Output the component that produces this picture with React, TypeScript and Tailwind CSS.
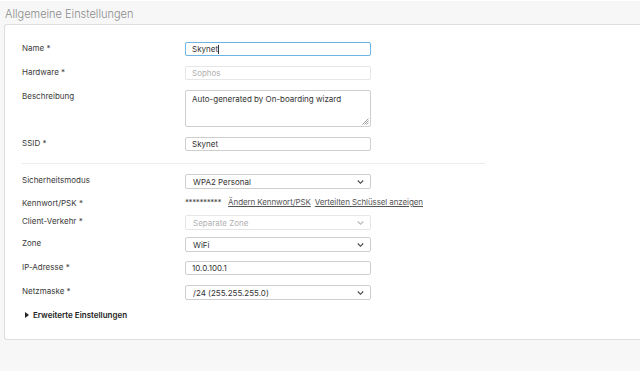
import React from "react";

const Chevron = ({ disabled = false }: { disabled?: boolean }) => (
  <svg width="7" height="5" viewBox="0 0 7 5" className="absolute right-[6px] top-1/2 -translate-y-1/2">
    <path d="M0.8 1 L3.5 3.8 L6.2 1" fill="none" stroke={disabled ? "#b5b5b5" : "#444"} strokeWidth="1.1" />
  </svg>
);

const Label = ({ children }: { children: React.ReactNode }) => (
  <div className="w-[163px] shrink-0 text-[8px] leading-[10px] text-[#3a3a3a] pt-[1px]">{children}</div>
);

const Input = ({ value, disabled = false, focused = false }: { value: string; disabled?: boolean; focused?: boolean }) => (
  <div
    className={
      "w-[186px] h-[14px] rounded-[2px] border px-[6px] text-[8px] leading-[12px] flex items-center " +
      (focused
        ? "border-[#6cb4e4] text-[#333]"
        : disabled
        ? "border-[#e6e6e6] text-[#b0b0b0]"
        : "border-[#cfcfcf] text-[#333]")
    }
  >
    {value}
    {focused && <span className="inline-block w-[1px] h-[9px] bg-[#333]" />}
  </div>
);

const Select = ({ value, disabled = false }: { value: string; disabled?: boolean }) => (
  <div
    className={
      "relative w-[186px] h-[15px] rounded-[2px] border px-[7px] text-[8px] leading-[12px] flex items-center " +
      (disabled ? "border-[#e6e6e6] text-[#b0b0b0]" : "border-[#cfcfcf] text-[#333]")
    }
  >
    {value}
    <Chevron disabled={disabled} />
  </div>
);

export default function App() {
  return (
    <div className="w-[640px] h-[371px] bg-[#f7f7f7] overflow-hidden" style={{ fontFamily: "Inter, 'Noto Sans', sans-serif" }}>
      <div className="h-[24px] border-t border-white pl-[5px] flex items-center">
        <span className="text-[11px] font-light text-[#8c8c8c] leading-[14px] pt-[2px]">Allgemeine Einstellungen</span>
      </div>
      <div className="ml-[4px] h-[316px] bg-white border border-r-0 border-[#dedede] rounded-l-[3px] pl-[17px] pt-[17px]">
        <div className="flex">
          <Label>Name *</Label>
          <Input value="Skynet" focused />
        </div>
        <div className="flex mt-[10px]">
          <Label>Hardware *</Label>
          <Input value="Sophos" disabled />
        </div>
        <div className="flex mt-[10px]">
          <Label>Beschreibung</Label>
          <div className="relative w-[186px] h-[37px] rounded-[2px] border border-[#cfcfcf] px-[6px] pt-[2px] text-[8px] leading-[12px] text-[#333]">
            Auto-generated by On-boarding wizard
            <svg width="7" height="7" viewBox="0 0 7 7" className="absolute right-[1px] bottom-[1px]">
              <path d="M6.5 0.5 L0.5 6.5 M6.5 2.5 L2.5 6.5 M6.5 4.5 L4.5 6.5" stroke="#8a8a8a" strokeWidth="0.8" />
            </svg>
          </div>
        </div>
        <div className="flex mt-[10px]">
          <Label>SSID *</Label>
          <Input value="Skynet" />
        </div>
        <div className="w-[463px] h-px bg-[#ececec] mt-[12px]" />
        <div className="flex mt-[10px]">
          <Label>Sicherheitsmodus</Label>
          <Select value="WPA2 Personal" />
        </div>
        <div className="flex mt-[7px] h-[12px] items-center">
          <Label>Kennwort/PSK *</Label>
          <div className="flex items-center text-[8px] leading-[10px] text-[#444]">
            <span className="tracking-[-0.4px]">**********</span>
            <span className="underline text-[#555] ml-[7px] tracking-[-0.1px]">Ändern Kennwort/PSK</span>
            <span className="underline text-[#555] ml-[4px] tracking-[-0.1px]">Verteilten Schlüssel anzeigen</span>
          </div>
        </div>
        <div className="flex mt-[7px]">
          <Label>Client-Verkehr *</Label>
          <Select value="Separate Zone" disabled />
        </div>
        <div className="flex mt-[7px]">
          <Label>Zone</Label>
          <Select value="WiFi" />
        </div>
        <div className="flex mt-[9px]">
          <Label>IP-Adresse *</Label>
          <Input value="10.0.100.1" />
        </div>
        <div className="flex mt-[10px]">
          <Label>Netzmaske *</Label>
          <Select value="/24 (255.255.255.0)" />
        </div>
        <div className="flex items-center mt-[10px] ml-[3px] gap-[4px] text-[8px] leading-[10px] font-semibold text-[#222]">
          <svg width="4" height="6" viewBox="0 0 4 6">
            <path d="M0 0 L4 3 L0 6 Z" fill="#222" />
          </svg>
          <span>Erweiterte Einstellungen</span>
        </div>
      </div>
    </div>
  );
}
